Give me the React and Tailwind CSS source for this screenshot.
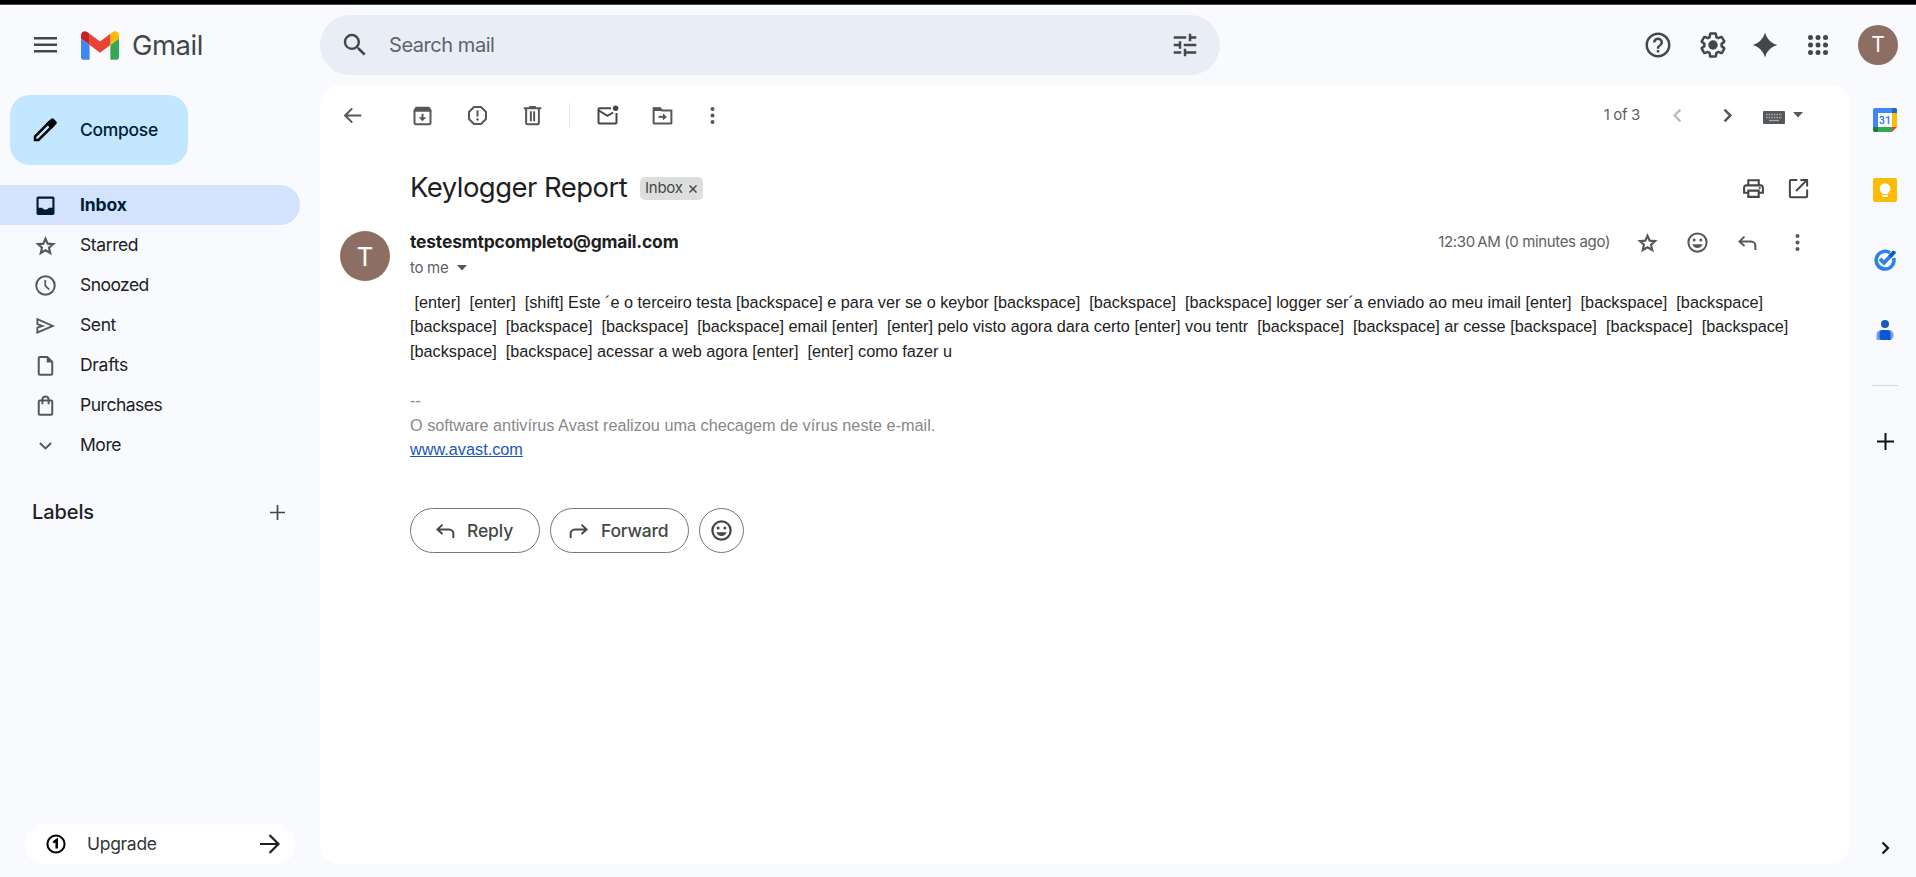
import { MdSearch, MdTune, MdHelpOutline, MdOutlinePrint } from "react-icons/md";

function Svg({ size = 25, className = "", children }) {
  return (
    <svg width={size} height={size} viewBox="0 0 20 20" fill="none" stroke="currentColor" strokeWidth="1.6" className={`shrink-0 ${className}`}>
      {children}
    </svg>
  );
}

const solid = { fill: "currentColor", stroke: "none" };

const InboxIcon = () => (
  <Svg>
    <path {...solid} fillRule="evenodd" d="M4.2 2.8h11.6c.8 0 1.4.6 1.4 1.4v11.9c0 .8-.6 1.4-1.4 1.4H4.2c-.8 0-1.4-.6-1.4-1.4V4.2c0-.8.6-1.4 1.4-1.4zm.3 1.7v7.2h2.8c.5.9 1.500 1.500 2.700 1.500s2.200-.6 2.700-1.500h2.800V4.500z" />
  </Svg>
);
const StarIcon = () => (
  <Svg>
    <path d="m10 4.500 1.700 4 4.400.4-3.300 2.900 1 4.200-3.800-2.200L6.200 16l1-4.200-3.300-2.900 4.400-.4z" strokeWidth="1.700" />
  </Svg>
);
const ClockIcon = () => (
  <Svg>
    <circle cx="10" cy="10" r="7.4" />
    <path d="M9.800 5.600v4.600l3.200 3.100" strokeWidth="1.400" />
  </Svg>
);
const SentIcon = () => (
  <Svg>
    <path d="M3.500 4.900 15.800 10.300 3.500 15.700v-4l4-1.400-4-1.400z" strokeWidth="1.500" />
  </Svg>
);
const DraftIcon = () => (
  <Svg>
    <path d="M5.600 3.100h5.800l4 4v9.300c0 .6-.4 1-1 1H5.600c-.6 0-1-.4-1-1V4.100c0-.6.400-1 1-1z" />
    <path {...solid} d="M11 3v4.600h4.600z" />
  </Svg>
);
const BagIcon = () => (
  <Svg>
    <rect x="4.600" y="6" width="10.800" height="11.400" rx="0.900" />
    <path d="M7.500 9V5.200a2.500 2.500 0 0 1 5 0V9" />
  </Svg>
);
const MoreIcon = () => (
  <Svg>
    <path d="m5.500 8 4.500 4.300L14.500 8" />
  </Svg>
);
const DotsIcon = () => (
  <Svg>
    <g {...solid}>
      <circle cx="10" cy="4.800" r="1.600" />
      <circle cx="10" cy="10" r="1.600" />
      <circle cx="10" cy="15.200" r="1.600" />
    </g>
  </Svg>
);
const SmileIcon = ({ heavy }) => (
  <Svg>
    <circle cx="10" cy="10" r="7.300" strokeWidth={heavy ? 1.800 : 1.600} />
    <g {...solid}>
      <circle cx="7.300" cy="7.900" r="1.200" />
      <circle cx="12.700" cy="7.900" r="1.200" />
      <path d="M5.900 11.300h8.200c-.6 1.800-2.200 3.100-4.100 3.100s-3.500-1.300-4.100-3.100z" />
    </g>
  </Svg>
);
const ReplyIcon = ({ flip }) => (
  <Svg className={flip ? "-scale-x-100" : ""}>
    <path d="M7.600 5.300 3.600 9.100l4 3.800M3.800 9.100h9c2 0 3.500 1.500 3.500 3.500v3.300" />
  </Svg>
);
const GearIcon = () => (
  <svg width="30" height="30" viewBox="0 0 24 24" fill="currentColor" className="shrink-0">
    <path d="M13.850 22.250h-3.700c-.74 0-1.360-.54-1.450-1.270l-.27-1.890c-.27-.14-.53-.29-.79-.46l-1.800.72c-.7.260-1.470-.03-1.810-.65L2.200 15.530c-.35-.66-.2-1.440.36-1.880l1.530-1.190c-.01-.15-.02-.3-.02-.46 0-.15.010-.31.020-.46l-1.520-1.190c-.59-.45-.74-1.260-.37-1.880l1.850-3.190c.34-.62 1.110-.9 1.790-.63l1.810.73c.26-.17.52-.32.78-.46l.27-1.910c.09-.7.710-1.250 1.440-1.250h3.700c.74 0 1.360.54 1.450 1.270l.27 1.890c.27.140.530.290.790.460l1.800-.72c.71-.26 1.480.030 1.820.650l1.840 3.180c.36.660.200 1.440-.36 1.880l-1.520 1.190c.01.150.020.300.020.460s-.01.310-.02.460l1.520 1.190c.56.450.720 1.230.370 1.860l-1.860 3.220c-.34.620-1.110.900-1.800.630l-1.800-.72c-.26.170-.52.320-.78.460l-.27 1.910c-.1.680-.72 1.220-1.460 1.220zm-3.230-2h2.760l.37-2.550.53-.22c.44-.18.880-.44 1.340-.78l.45-.34 2.380.960 1.380-2.400-2.030-1.580.07-.56c.03-.26.060-.51.060-.78s-.03-.53-.06-.78l-.07-.56 2.030-1.580-1.390-2.400-2.390.960-.45-.35c-.42-.32-.87-.58-1.330-.77l-.52-.22-.37-2.550h-2.760l-.37 2.550-.53.210c-.44.190-.88.440-1.340.790l-.45.330-2.380-.95-1.390 2.390 2.030 1.580-.07.560a7 7 0 0 0-.06.790c0 .260.020.530.060.780l.07.560-2.030 1.580 1.380 2.400 2.390-.96.450.350c.43.330.860.580 1.330.770l.53.220z" />
    <circle cx="12" cy="12" r="3.800" />
  </svg>
);

function GmailLogo() {
  return (
    <svg width="38" height="29" viewBox="52 42 88 66" className="shrink-0">
      <path fill="#4285f4" d="M58 108h14V74L52 59v43c0 3.320 2.690 6 6 6" />
      <path fill="#34a853" d="M120 108h14c3.320 0 6-2.690 6-6V59l-20 15" />
      <path fill="#fbbc04" d="M120 48v26l20-15v-8c0-7.420-8.470-11.650-14.400-7.200" />
      <path fill="#ea4335" d="M72 74V48l24 18 24-18v26L96 92" />
      <path fill="#c5221f" d="M52 51v8l20 15V48l-5.600-4.200c-5.940-4.450-14.400-.22-14.400 7.200" />
    </svg>
  );
}

/* Fixed-size cell that centres an icon. */
const Cell = ({ w, className = "", children }) => (
  <div className={`flex shrink-0 items-center justify-center ${w} ${className}`}>{children}</div>
);

const NAV = [
  { label: "Inbox", icon: InboxIcon, active: true, track: "tracking-[-0.1px]" },
  { label: "Starred", icon: StarIcon, track: "tracking-[-0.4px]" },
  { label: "Snoozed", icon: ClockIcon, track: "tracking-[-0.55px]" },
  { label: "Sent", icon: SentIcon, track: "tracking-[-0.4px]" },
  { label: "Drafts", icon: DraftIcon, track: "tracking-[-0.3px]" },
  { label: "Purchases", icon: BagIcon, track: "tracking-[-0.48px]" },
  { label: "More", icon: MoreIcon, track: "tracking-[-0.45px]" },
];

function Header() {
  return (
    <header className="flex h-20 shrink-0 items-center">
      <div className="flex w-80 items-center pl-[30px] text-[#444746]">
        <Cell w="w-[30px]">
          <svg width="23" height="16" viewBox="0 0 23 16" fill="currentColor">
            <path d="M0 0h23v2.500H0zM0 6.500h23V9H0zM0 13h23v2.500H0z" />
          </svg>
        </Cell>
        <div className="ml-[21px]"><GmailLogo /></div>
        <span className="mt-px ml-[13px] text-[27.5px] leading-none tracking-[-0.5px]">Gmail</span>
      </div>
      <div className="flex h-[60px] w-[900px] items-center rounded-full bg-[#e9eef6] text-[#444746]">
        <Cell w="w-[69px]"><MdSearch size={30} /></Cell>
        <span className="flex-1 text-[20px] tracking-[-0.45px] text-[#5f6368]">Search mail</span>
        <Cell w="w-[70px]"><MdTune size={30} /></Cell>
      </div>
      <div className="ml-[408px] flex items-center text-[#444746]">
        <Cell w="w-[60px]"><MdHelpOutline size={30} /></Cell>
        <Cell w="w-[50px]"><GearIcon /></Cell>
        <Cell w="w-[54px]">
          <svg width="26" height="26" viewBox="0 0 26 26" fill="currentColor">
            <path d="M13 .500C14.800 7 19 11.200 25.500 13 19 14.800 14.800 19 13 25.500 11.200 19 7 14.800.500 13 7 11.200 11.200 7 13 .500z" />
          </svg>
        </Cell>
        <Cell w="w-[52px]">
          <svg width="20" height="20" viewBox="0 0 20 20" fill="currentColor">
            {[2.500, 10, 17.500].map((y) => [2.500, 10, 17.500].map((x) => <circle key={`${x}-${y}`} cx={x} cy={y} r="2.500" />))}
          </svg>
        </Cell>
        <div className="ml-[14px] flex size-10 items-center justify-center rounded-full bg-[#8d6e63] text-[21px] text-white">T</div>
      </div>
    </header>
  );
}

function Sidebar() {
  return (
    <aside className="flex w-80 shrink-0 flex-col text-[17.5px] text-[#202124]">
      <div className="mt-[10px] ml-[10px] flex h-[70px] w-[178px] items-center rounded-[20px] bg-[#c2e7ff] font-medium text-[#001d35]">
        <Cell w="w-[70px]">
          <svg width="30" height="30" viewBox="0 0 24 24" fill="none" stroke="#000" strokeWidth="2">
            <path d="M4 20v-2.800L15.300 5.900l2.800 2.800L6.800 20z" />
            <path fill="#000" stroke="none" d="m12.800 7 3.900-3.900c.7-.7 1.700-.7 2.400 0l1.800 1.800c.7.700.7 1.700 0 2.400L17 11.200z" />
          </svg>
        </Cell>
        <span className="tracking-[-0.3px]">Compose</span>
      </div>
      <nav className="mt-5 w-[300px]">
        {NAV.map(({ label, icon: Icon, active, track }) => (
          <div key={label} className={`flex h-10 items-center rounded-r-full ${active ? "bg-[#d3e3fd] font-bold text-[#001d35]" : ""}`}>
            <Cell w="w-20" className={`pt-px pl-[10px] ${active ? "" : "text-[#55585a]"}`}><Icon /></Cell>
            <span className={track}>{label}</span>
          </div>
        ))}
      </nav>
      <div className="mt-[27px] flex h-10 w-[300px] items-center justify-between pr-[14px] pl-[32px]">
        <span className="text-[20px] font-[450] tracking-[-0.1px]">Labels</span>
        <svg width="17" height="17" viewBox="0 0 17 17" stroke="#444746" strokeWidth="1.700"><path d="M8.500 1v15M1 8.500h15" /></svg>
      </div>
      <div className="mt-auto ml-[25px] flex h-10 w-[270px] items-center rounded-full bg-white pr-[15px] pl-[21px]">
        <svg width="20" height="20" viewBox="0 0 20 20" fill="none" stroke="#000" strokeWidth="2">
          <circle cx="10" cy="10" r="8.600" />
          <path d="M7.200 8.600 10.700 6v8.500" strokeWidth="2.500" />
        </svg>
        <span className="ml-[21px] flex-1 tracking-[-0.3px] text-[#333638]">Upgrade</span>
        <svg width="20" height="20" viewBox="0 0 20 20" fill="none" stroke="#1f1f1f" strokeWidth="2.200"><path d="M0 10h18M9.500 1l9 9-9 9" /></svg>
      </div>
    </aside>
  );
}

function Toolbar() {
  return (
    <div className="flex h-[61px] items-center text-[#55585a]">
      <Cell w="w-[65px]"><Svg><path d="M17 10H4.300M9.800 4.300 4.100 10l5.700 5.700" /></Svg></Cell>
      <Cell w="w-[55px]" className="ml-[10px]">
        <Svg>
          <path d="M3.600 6.200v9.700c0 .6.400 1 1 1h10.800c.6 0 1-.4 1-1V6.200" />
          <path {...solid} d="M2.900 5.300 4.600 3h10.800l1.700 2.300v1.600H2.900z" />
          <path d="M10 8.600v4" /><path {...solid} d="M6.900 11.300h6.200L10 14.500z" />
        </Svg>
      </Cell>
      <Cell w="w-[55px]">
        <Svg>
          <path d="M7.200 3.200h5.600l4 4v5.600l-4 4H7.200l-4-4V7.200z" />
          <path d="M10 5.900v5" /><circle {...solid} cx="10" cy="13.200" r="1" />
        </Svg>
      </Cell>
      <Cell w="w-[55px]">
        <Svg>
          <path d="M4.900 4.500v11.400c0 .6.400 1 1 1h8.200c.6 0 1-.4 1-1V4.500M3 4.200h14M7.300 3.100h5.400" />
          <path d="M8.700 6.500v8M11.300 6.500v8" />
        </Svg>
      </Cell>
      <div className="ml-[9px] h-[25px] w-px bg-[#e4e6e8]" />
      <Cell w="w-[55px]" className="ml-[10px] text-[#444746]">
        <Svg>
          <path d="M12.800 4.200H3.600c-.4 0-.8.400-.8.800v10.600c0 .4.400.8.800.8h12.800c.4 0 .8-.4.800-.8V8M3 6l7 4.300 4.500-2.700" />
          <circle {...solid} cx="16.500" cy="4.200" r="2.200" />
        </Svg>
      </Cell>
      <Cell w="w-[55px]">
        <Svg>
          <path d="M2.900 15.900V4.200H8l1.700 1.700h7.400v10c0 .3-.3.500-.6.500h-13c-.3 0-.6-.2-.6-.5z" />
          <path {...solid} d="M2.900 3.600H8l2 2.800H2.900z" />
          <path d="M6.800 11.100h4" /><path {...solid} d="m10.300 8.200 3.200 2.900-3.200 2.900z" />
        </Svg>
      </Cell>
      <Cell w="w-[45px]"><DotsIcon /></Cell>
      <div className="ml-auto flex items-center pr-[47px]">
        <span className="mr-[25px] text-[15px] tracking-[-0.35px] text-[#5e6164]">1 of 3</span>
        <svg width="25" height="25" viewBox="0 0 20 20" fill="none" stroke="#b7b9bb" strokeWidth="1.700"><path d="m12.300 5.300-4.700 4.700 4.700 4.700" /></svg>
        <svg width="25" height="25" viewBox="0 0 20 20" fill="none" stroke="#55585a" strokeWidth="2" className="ml-[25px]"><path d="m7.600 5.300 4.700 4.700-4.700 4.700" /></svg>
        <svg width="22" height="13" viewBox="0 0 22 13" className="mt-[3px] ml-[23px]">
          <rect width="22" height="13" rx="1" fill="#55585a" />
          <path d="M3 3.500h16M3 6.500h16" stroke="#aaacad" strokeWidth="1.300" strokeDasharray="1.600 1" />
          <path d="M6 9.500h10" stroke="#aaacad" strokeWidth="1.300" />
        </svg>
        <svg width="10" height="6" viewBox="0 0 10 6" className="-mt-0.5 ml-2" fill="#55585a"><path d="M0 0h10L5 5.500z" /></svg>
      </div>
    </div>
  );
}

const PILL = "flex h-[45px] items-center rounded-full border border-[#747775]";

function Message() {
  return (
    <div className="flex flex-col">
      <div className="mt-[21px] flex h-[42px] items-center pr-[39px] pl-[90px]">
        <h1 className="text-[27.5px] leading-none tracking-[-0.55px] text-[#1f1f1f]">Keylogger Report</h1>
        <div className="ml-[13px] flex h-[23px] w-[63px] items-center rounded-[5px] bg-[#dddfdd] pl-[5px] text-[15px] text-[#444746]">
          <span className="tracking-[-0.3px]">Inbox</span>
          <svg width="8" height="8" viewBox="0 0 8 8" stroke="#444746" strokeWidth="1.500" className="mt-0.5 ml-[6px]"><path d="m.500.500 7 7m0-7-7 7" /></svg>
        </div>
        <div className="ml-auto flex gap-[20px] text-[#444746]">
          <MdOutlinePrint size={25} />
          <Svg><path d="M9 3.100H3.900c-.4 0-.8.400-.8.800v12.200c0 .4.400.8.800.8h12.200c.4 0 .8-.4.800-.8V10.800M11.500 3.100h5.400v5.200M16.700 3.300 8 12" /></Svg>
        </div>
      </div>
      <div className="mt-[20px] flex h-[61px] pl-5">
        <div className="mt-[2px] flex size-[50px] items-center justify-center rounded-full bg-[#8d6e63] text-[26px] text-white">T</div>
        <div className="ml-5 flex flex-col">
          <span className="text-[17.5px] leading-[26px] font-bold tracking-[-0.2px] text-[#1f1f1f]">testesmtpcompleto@gmail.com</span>
          <div className="mt-px flex h-6 items-center text-[15px] text-[#5e6164]">
            <span className="tracking-[-0.3px]">to me</span>
            <svg width="10" height="6" viewBox="0 0 10 6" fill="#55585a" className="ml-[9px]"><path d="M0 0h10L5 5.500z" /></svg>
          </div>
        </div>
        <div className="ml-auto flex h-[26px] items-center pr-[28px] text-[#55585a]">
          <span className="mr-[12px] text-[15px] tracking-[-0.36px] text-[#5e6164]">12:30{"\u202f"}AM (0 minutes ago)</span>
          <Cell w="w-[50px]"><StarIcon /></Cell>
          <Cell w="w-[50px]"><SmileIcon /></Cell>
          <Cell w="w-[50px]"><ReplyIcon /></Cell>
          <Cell w="w-[50px]"><DotsIcon /></Cell>
        </div>
      </div>
      <div className="ml-[90px] font-['Liberation_Sans',Arial,sans-serif] text-[16.25px] leading-[24.375px] whitespace-pre text-[#222]">
        <p>{" [enter]  [enter]  [shift] Este ´e o terceiro testa [backspace] e para ver se o keybor [backspace]  [backspace]  [backspace] logger ser´a enviado ao meu imail [enter]  [backspace]  [backspace]"}</p>
        <p>{"[backspace]  [backspace]  [backspace]  [backspace] email [enter]  [enter] pelo visto agora dara certo [enter] vou tentr  [backspace]  [backspace] ar cesse [backspace]  [backspace]  [backspace]"}</p>
        <p>{"[backspace]  [backspace] acessar a web agora [enter]  [enter] como fazer u"}</p>
        <p className="mt-[25px] text-[#888]">--</p>
        <p className="text-[#888]">O software antivírus Avast realizou uma checagem de vírus neste e-mail.</p>
        <p className="text-[#1a56b8] underline">www.avast.com</p>
      </div>
      <div className="mt-[47px] ml-[90px] flex gap-[10px] text-[17.5px] font-medium text-[#444746]">
        <div className={`${PILL} w-[130px] pl-[22px]`}>
          <ReplyIcon /><span className="ml-[9px] tracking-[-0.15px]">Reply</span>
        </div>
        <div className={`${PILL} w-[139px] pl-[15px]`}>
          <ReplyIcon flip /><span className="ml-[10px] tracking-[-0.2px]">Forward</span>
        </div>
        <div className={`${PILL} w-[45px] justify-center`}><SmileIcon heavy /></div>
      </div>
    </div>
  );
}

function Rail() {
  return (
    <aside className="flex h-[779px] w-[66px] flex-col items-center pl-1">
      <svg width="24" height="24" viewBox="0 0 24 24" className="mt-[23px]">
        <path fill="#4285f4" d="M2 0h20a2 2 0 0 1 2 2v3.500H5.500V24H2a2 2 0 0 1-2-2V2a2 2 0 0 1 2-2z" />
        <path fill="#fff" d="M5 5h14v14H5z" />
        <path fill="#fbbc04" d="M19 5h5v14h-5z" />
        <path fill="#1967d2" d="M19 0h3a2 2 0 0 1 2 2v3h-5z" />
        <path fill="#34a853" d="M5 19h14v5H5z" />
        <path fill="#188038" d="M0 19h5v5H2a2 2 0 0 1-2-2z" />
        <path fill="#ea4335" d="M19 19h5l-5 5z" />
        <text x="12" y="16" fontSize="10.500" textAnchor="middle" fill="#1a73e8" fontFamily="Roboto, sans-serif" fontWeight="500">31</text>
      </svg>
      <svg width="24" height="24" viewBox="0 0 24 24" className="mt-[46px]">
        <rect width="24" height="24" rx="2" fill="#fbbc04" />
        <circle cx="12" cy="10.500" r="5.300" fill="#fff" />
        <path fill="#fff" d="M9.200 14h5.600v2H9.200zM9.200 17h5.600v2H9.200z" />
      </svg>
      <svg width="24" height="24" viewBox="0 0 24 24" className="mt-[46px]" fill="none">
        <path d="M17 4.800a8.900 8.900 0 1 0 3.700 5.200" stroke="#2f80ed" strokeWidth="3.500" />
        <path d="m7 10.800 4 4L21.500 4" stroke="#2f80ed" strokeWidth="3.800" />
        <path d="m15.500 7.200 4.700-4.700 3 1.500-5 5.800z" fill="#0b5cc4" />
      </svg>
      <svg width="24" height="24" viewBox="0 0 24 24" className="mt-[46px]">
        <circle cx="12" cy="6" r="4" fill="#185abc" />
        <path fill="#7b9cf0" d="M8.500 12h7c3 0 5 2 5 5s-1.500 5-4 5h-13v-5c0-3 2-5 5-5z" />
        <path fill="#0b57d0" d="M9.500 12h5c1.700 0 3 1.600 3 3.500V22h-8.500c-1.500 0-2.500-1-2.500-2.500v-4c0-1.900 1.300-3.500 3-3.500z" />
      </svg>
      <div className="mt-[43px] h-px w-[26px] bg-[#d5d8dc]" />
      <svg width="17" height="17" viewBox="0 0 17 17" className="mt-[47px]" stroke="#111" strokeWidth="2"><path d="M8.500 0v17M0 8.500h17" /></svg>
      <svg width="9" height="14" viewBox="0 0 9 14" className="mt-auto mb-[9px]" fill="none" stroke="#111" strokeWidth="2.200"><path d="m1.500 1.500 5.500 5.500-5.500 5.500" /></svg>
    </aside>
  );
}

export default function App() {
  return (
    <div className="flex h-[877px] w-[1916px] flex-col overflow-hidden bg-[#f8fafd] font-[Inter,Roboto,sans-serif]">
      <div className="h-[5px] shrink-0 border-b border-[#4a4b4c] bg-black" />
      <Header />
      <div className="flex h-[779px]">
        <Sidebar />
        <main className="flex w-[1530px] flex-col rounded-[20px] bg-white">
          <Toolbar />
          <Message />
        </main>
        <Rail />
      </div>
    </div>
  );
}
